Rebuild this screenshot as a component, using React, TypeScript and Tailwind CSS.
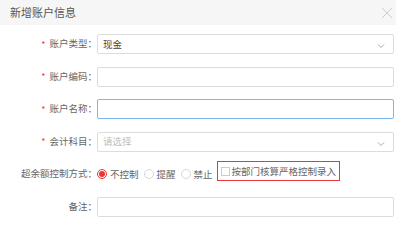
import React from 'react'

const font = { fontFamily: '"Noto Sans CJK SC", "Noto Sans", sans-serif' }

function Label({ text, required }: { text: string; required?: boolean }) {
    return (
        <div className="w-[97px] shrink-0 flex items-center justify-end text-[9.5px] text-[#666] leading-none">
            {required && <span className="text-[#f33] mr-[4px] text-[9px]">*</span>}
            <span>{text}：</span>
        </div>
    )
}

function Radio({ label, checked }: { label: string; checked?: boolean }) {
    return (
        <label className="flex items-center mr-[5px]">
            <span
                className={
                    checked
                        ? 'w-[10px] h-[10px] rounded-full border border-[#e33] flex items-center justify-center'
                        : 'w-[10px] h-[10px] rounded-full border border-[#d8d8d8] bg-white'
                }
            >
                {checked && <span className="w-[6px] h-[6px] rounded-full bg-[#e33]" />}
            </span>
            <span className="ml-[3px] text-[9.5px] text-[#666]">{label}</span>
        </label>
    )
}

function Chevron() {
    return (
        <svg width="8" height="6" viewBox="0 0 8 6" className="absolute right-[8px] top-[8px]">
            <path d="M1 1.5 L4 4.5 L7 1.5" fill="none" stroke="#aaa" strokeWidth="1" />
        </svg>
    )
}

export default function App() {
    return (
        <div className="w-[396px] h-[229px] bg-white overflow-hidden" style={font}>
            <div className="h-[25px] bg-[#f6f6f6] flex items-center justify-between pl-[10px] pr-[3px]">
                <span className="text-[11px] text-[#555]">新增账户信息</span>
                <svg width="12" height="12" viewBox="0 0 12 12">
                    <path d="M1 1 L11 11 M11 1 L1 11" stroke="#cfcfcf" strokeWidth="1" />
                </svg>
            </div>

            <div className="flex flex-col gap-[12.5px] pt-[9px] pr-[2px]">
                <div className="flex h-[20px]">
                    <Label text="账户类型" required />
                    <div className="relative flex-1 border border-[#dcdcdc] rounded-[2px] flex items-center pl-[5px] text-[9.5px] text-[#444]">
                        现金
                        <Chevron />
                    </div>
                </div>

                <div className="flex h-[20px]">
                    <Label text="账户编码" required />
                    <div className="flex-1 border border-[#dcdcdc] rounded-[2px]" />
                </div>

                <div className="flex h-[20px]">
                    <Label text="账户名称" required />
                    <div className="flex-1 border border-[#7db7f2] rounded-[2px]" />
                </div>

                <div className="flex h-[20px]">
                    <Label text="会计科目" required />
                    <div className="relative flex-1 border border-[#dcdcdc] rounded-[2px] flex items-center pl-[5px] text-[9.5px] text-[#c0c0c0]">
                        请选择
                        <Chevron />
                    </div>
                </div>

                <div className="flex h-[20px]">
                    <Label text="超余额控制方式" />
                    <div className="flex items-center">
                        <Radio label="不控制" checked />
                        <Radio label="提醒" />
                        <Radio label="禁止" />
                        <div className="ml-[-1px] h-[20px] -mt-[6px] border-[1.5px] border-[#e8383d] flex items-center pl-[3px] pr-[3px]">
                            <span className="w-[9px] h-[9px] border border-[#ccc] bg-white" />
                            <span className="ml-[2px] text-[9.5px] text-[#666]">按部门核算严格控制录入</span>
                        </div>
                    </div>
                </div>

                <div className="flex h-[20px]">
                    <Label text="备注" />
                    <div className="flex-1 border border-[#dcdcdc] rounded-[2px]" />
                </div>
            </div>
        </div>
    )
}
